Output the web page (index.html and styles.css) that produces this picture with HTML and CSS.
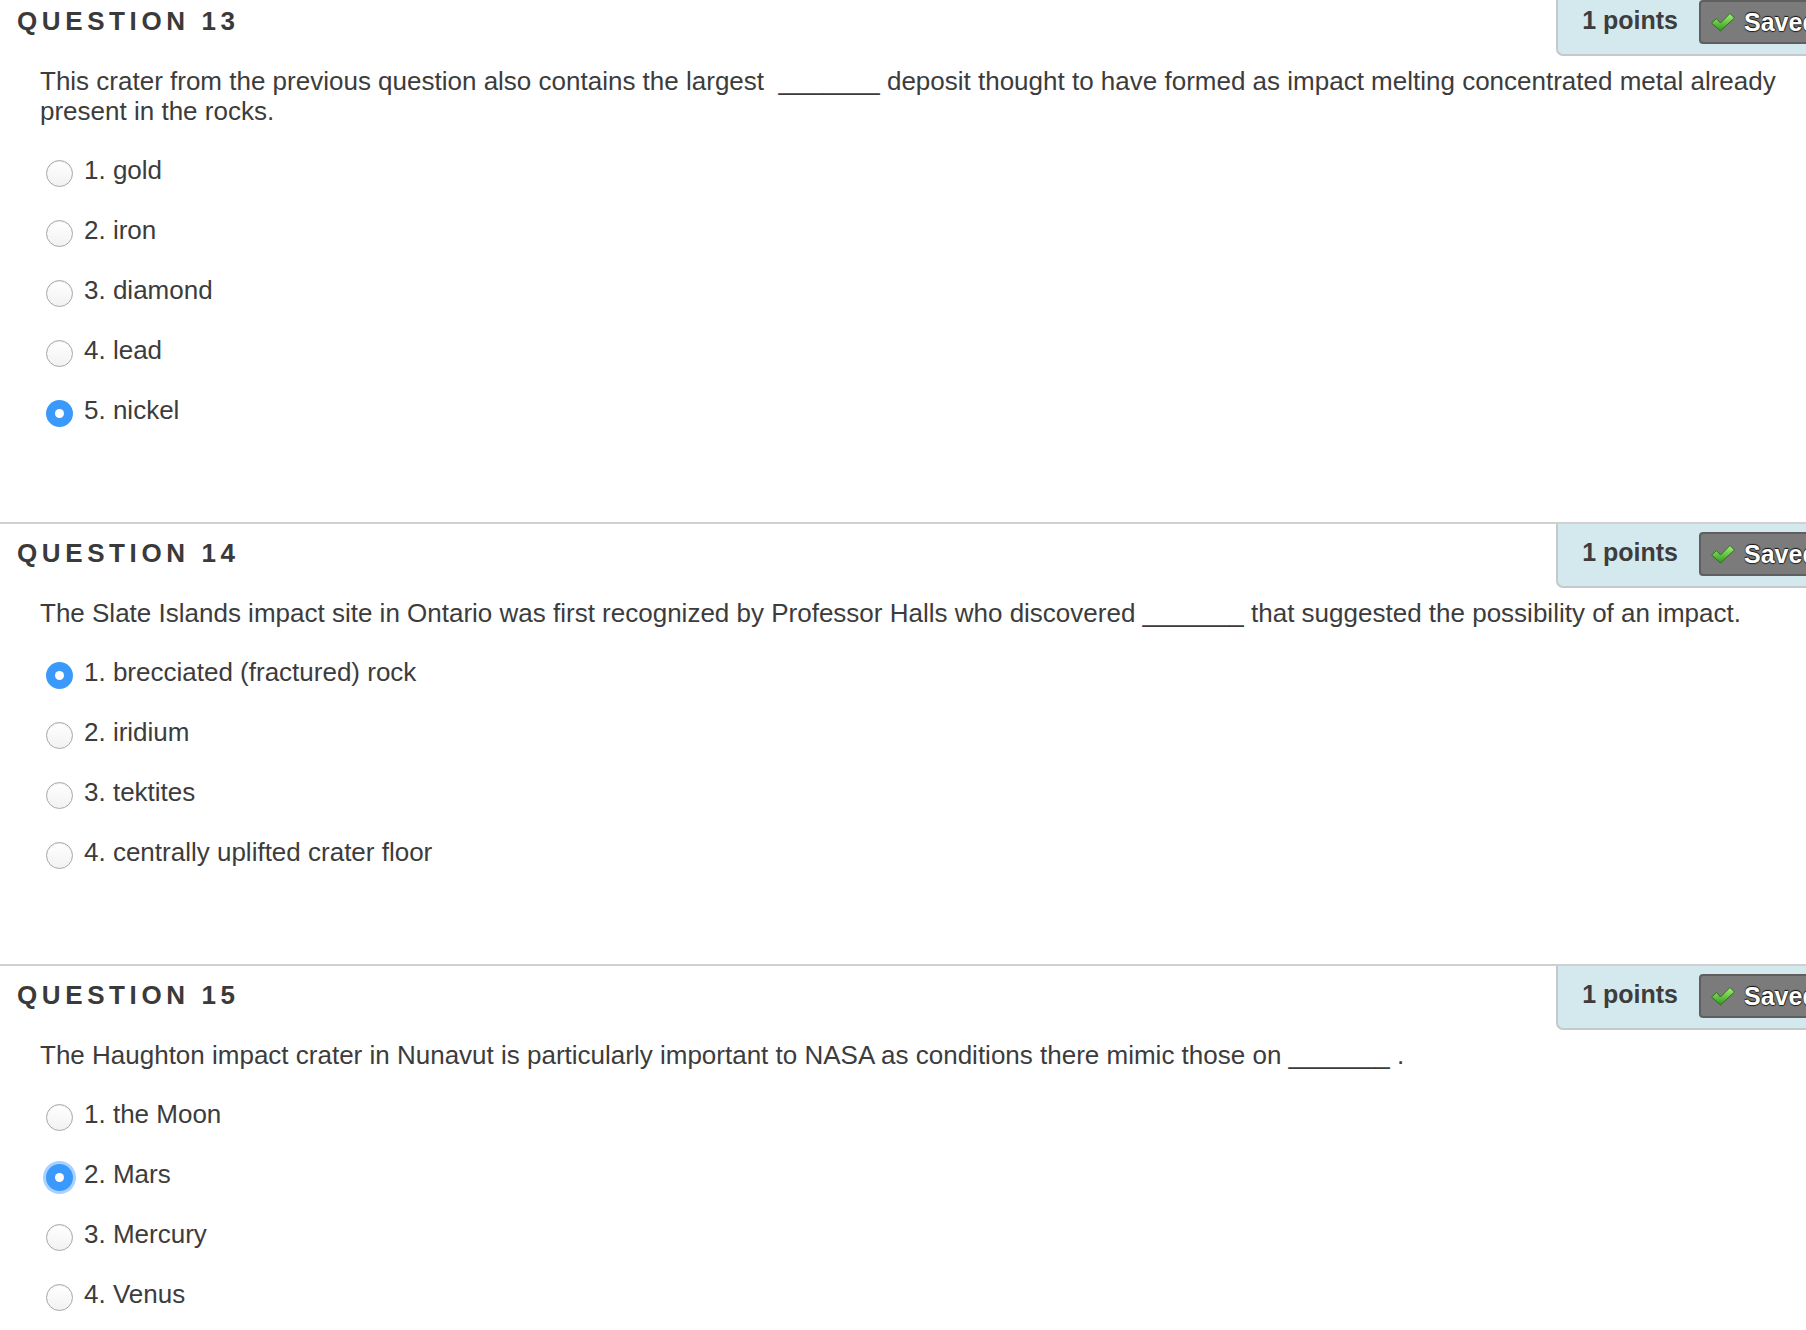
FILE: index.html
```html
<!DOCTYPE html>
<html>
<head>
<meta charset="utf-8">
<link rel="stylesheet" href="styles.css">
</head>
<body>
<div class="page">

  <section class="question">
    <div class="q-head">
      <h2 class="q-title">QUESTION 13</h2>
      <div class="points">
        <span class="points-text">1 points</span>
        <span class="saved"><svg class="check" viewBox="0 0 26 22" width="26" height="22"><defs><linearGradient id="g1" x1="0" y1="0" x2="0" y2="1"><stop offset="0" stop-color="#a8f07a"/><stop offset="1" stop-color="#2c9a18"/></linearGradient></defs><path d="M1.5 12 L6.5 7.5 L10.5 12 L20 2.5 L24.5 7 L10.5 20 Z" fill="url(#g1)" stroke="#2a7318" stroke-width="1" stroke-linejoin="round"/></svg>Saved</span>
      </div>
    </div>
    <p class="q-text">This crater from the previous question also contains the largest &nbsp;_______ deposit thought to have formed as impact melting concentrated metal already present in the rocks.</p>
    <ul class="options">
      <li class="option"><span class="radio"></span>1. gold</li>
      <li class="option"><span class="radio"></span>2. iron</li>
      <li class="option"><span class="radio"></span>3. diamond</li>
      <li class="option"><span class="radio"></span>4. lead</li>
      <li class="option"><span class="radio checked"></span>5. nickel</li>
    </ul>
  </section>

  <section class="question">
    <div class="q-head">
      <h2 class="q-title">QUESTION 14</h2>
      <div class="points">
        <span class="points-text">1 points</span>
        <span class="saved"><svg class="check" viewBox="0 0 26 22" width="26" height="22"><defs><linearGradient id="g2" x1="0" y1="0" x2="0" y2="1"><stop offset="0" stop-color="#a8f07a"/><stop offset="1" stop-color="#2c9a18"/></linearGradient></defs><path d="M1.5 12 L6.5 7.5 L10.5 12 L20 2.5 L24.5 7 L10.5 20 Z" fill="url(#g2)" stroke="#2a7318" stroke-width="1" stroke-linejoin="round"/></svg>Saved</span>
      </div>
    </div>
    <p class="q-text">The Slate Islands impact site in Ontario was first recognized by Professor Halls who discovered _______ that suggested the possibility of an impact.</p>
    <ul class="options">
      <li class="option"><span class="radio checked"></span>1. brecciated (fractured) rock</li>
      <li class="option"><span class="radio"></span>2. iridium</li>
      <li class="option"><span class="radio"></span>3. tektites</li>
      <li class="option"><span class="radio"></span>4. centrally uplifted crater floor</li>
    </ul>
  </section>

  <section class="question">
    <div class="q-head">
      <h2 class="q-title">QUESTION 15</h2>
      <div class="points">
        <span class="points-text">1 points</span>
        <span class="saved"><svg class="check" viewBox="0 0 26 22" width="26" height="22"><defs><linearGradient id="g3" x1="0" y1="0" x2="0" y2="1"><stop offset="0" stop-color="#a8f07a"/><stop offset="1" stop-color="#2c9a18"/></linearGradient></defs><path d="M1.5 12 L6.5 7.5 L10.5 12 L20 2.5 L24.5 7 L10.5 20 Z" fill="url(#g3)" stroke="#2a7318" stroke-width="1" stroke-linejoin="round"/></svg>Saved</span>
      </div>
    </div>
    <p class="q-text">The Haughton impact crater in Nunavut is particularly important to NASA as conditions there mimic those on _______ .</p>
    <ul class="options">
      <li class="option"><span class="radio"></span>1. the Moon</li>
      <li class="option"><span class="radio checked focus"></span>2. Mars</li>
      <li class="option"><span class="radio"></span>3. Mercury</li>
      <li class="option"><span class="radio"></span>4. Venus</li>
    </ul>
  </section>

</div>
</body>
</html>
```

FILE: styles.css
```css
html, body {
  margin: 0;
  padding: 0;
  background: #ffffff;
  overflow: hidden;
}

body {
  font-family: "Liberation Sans", Arial, Helvetica, sans-serif;
  color: #3c3c3c;
  width: 1806px;
  height: 1330px;
}

.page {
  margin-top: -10px;
}

.question {
  border-top: 2px solid #d0d0d0;
  padding-bottom: 82px;
}

.q-head {
  display: flex;
  justify-content: space-between;
  align-items: flex-start;
  height: 64px;
}

.q-title {
  margin: 0;
  padding: 14px 0 0 17px;
  font-size: 26px;
  font-weight: bold;
  letter-spacing: 4.6px;
  line-height: 30px;
  color: #3a3a3a;
}

.points {
  display: flex;
  align-items: flex-start;
  gap: 21px;
  margin-right: -113px;
  height: 64px;
  box-sizing: border-box;
  padding: 8px 0 0 24px;
  background: #d4e9ee;
  border-left: 2px solid #c4c9cb;
  border-bottom: 2px solid #c4c9cb;
  border-bottom-left-radius: 7px;
}

.points-text {
  font-size: 25px;
  font-weight: bold;
  line-height: 30px;
  color: #3d3d3d;
  padding-top: 5px;
}

.saved {
  display: flex;
  align-items: center;
  gap: 8px;
  height: 44px;
  box-sizing: border-box;
  padding: 0 9px;
  width: 220px;
  background: #7b7b7b;
  border: 2px solid #5f5f5f;
  border-radius: 4px;
  font-size: 25px;
  font-weight: bold;
  color: #ffffff;
  text-shadow: 0 -1px 1px #111, 0 1px 1px #222, 1px 0 1px #222;
}

.check {
  flex: none;
}

.q-text {
  margin: 10px 12px 0 40px;
  font-size: 26px;
  line-height: 30px;
  color: #3c3c3c;
}

.options {
  list-style: none;
  margin: 14px 0 0 0;
  padding: 0;
}

.option {
  display: flex;
  align-items: center;
  height: 60px;
  padding-left: 46px;
  font-size: 26px;
  color: #3c3c3c;
}

.radio {
  flex: none;
  width: 27px;
  height: 27px;
  box-sizing: border-box;
  border-radius: 50%;
  border: 1px solid #a8a8a8;
  background: linear-gradient(#ffffff, #f2f2f2);
  box-shadow: inset 0 1px 1px rgba(0,0,0,0.08);
  margin-right: 11px;
  margin-top: 7px;
  position: relative;
}

.radio.checked {
  border: none;
  background: #3b99fc;
  box-shadow: none;
}

.radio.checked::after {
  content: "";
  position: absolute;
  left: 9px;
  top: 9px;
  width: 9px;
  height: 9px;
  border-radius: 50%;
  background: #ffffff;
}

.radio.focus {
  box-shadow: 0 0 0 3px rgba(59,153,252,0.45);
}
```
